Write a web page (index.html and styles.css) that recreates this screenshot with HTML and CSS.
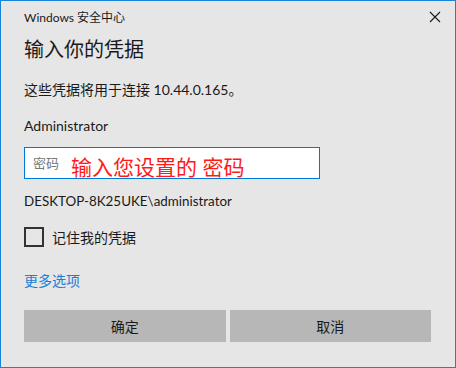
FILE: index.html
```html
<!DOCTYPE html>
<html lang="zh-CN">
<head>
  <meta charset="UTF-8">
  <title>Windows 安全中心</title>
  <link rel="stylesheet" href="styles.css">
</head>
<body>
<div class="window">
  <div class="titlebar">
    <span class="app">Windows 安全中心</span>
    <svg class="close" width="12" height="12" viewBox="0 0 12 12">
      <path d="M1 1 L11 11 M11 1 L1 11" stroke="#1a1a1a" stroke-width="1.1" fill="none"/>
    </svg>
  </div>
  <h1 class="heading">输入你的凭据</h1>
  <p class="line info">这些凭据将用于连接 10.44.0.165。</p>
  <p class="line user">Administrator</p>
  <div class="field">
    <input type="password" class="pwd" placeholder="密码">
    <span class="note">输入您设置的 密码</span>
  </div>
  <p class="line domain">DESKTOP-8K25UKE\administrator</p>
  <label class="remember"><span class="box"></span>记住我的凭据</label>
  <a class="more" href="#">更多选项</a>
  <div class="buttons">
    <button>确定</button>
    <button>取消</button>
  </div>
</div>
</body>
</html>
```
FILE: styles.css
```css
body {
  margin: 0;
  font-family: "Segoe UI", "Lato", "Noto Sans CJK SC", sans-serif;
  color: #1a1a1a;
}
.window {
  width: 456px;
  height: 368px;
  box-sizing: border-box;
  border: 1px solid #1883d7;
  background: #e6e6e6;
  padding: 0 23px;
  display: flex;
  flex-direction: column;
}
.titlebar {
  display: flex;
  justify-content: space-between;
  align-items: center;
  height: 31px;
  margin-right: -19px;
}
.app { font-size: 12px; }
.close { margin-right: 10px; }
.heading {
  margin: 3px 0 0;
  font-size: 20px;
  font-weight: normal;
  line-height: 28px;
}
.line {
  margin: 0;
  font-size: 14px;
  line-height: 20px;
}
.info { margin-top: 17px; }
.user { margin-top: 16px; }
.field {
  position: relative;
  margin-top: 11px;
  width: 296px;
}
.pwd {
  width: 100%;
  height: 32px;
  box-sizing: border-box;
  border: 1px solid #0078d7;
  background: #fff;
  padding: 0 8px;
  font: 13px "Segoe UI", "Lato", "Noto Sans CJK SC", sans-serif;
  outline: none;
}
.pwd::placeholder { color: #777; }
.note {
  position: absolute;
  left: 47px;
  top: 8px;
  color: #ff1a1a;
  font-size: 21px;
  line-height: 24px;
  white-space: nowrap;
}
.domain { margin-top: 12px; font-size: 13.4px; }
.remember {
  display: flex;
  align-items: center;
  gap: 8px;
  margin-top: 16px;
  font-size: 14px;
}
.box {
  width: 20px;
  height: 20px;
  box-sizing: border-box;
  border: 2px solid #333;
}
.more {
  margin-top: 24px;
  font-size: 14px;
  line-height: 20px;
  color: #1a7fd4;
  text-decoration: none;
  align-self: flex-start;
}
.buttons {
  display: flex;
  gap: 4px;
  margin-top: 19px;
  margin-right: 1px;
}
.buttons button {
  flex: 1;
  height: 32px;
  border: none;
  background: #b7b7b7;
  color: #1a1a1a;
  font: 14px "Segoe UI", "Lato", "Noto Sans CJK SC", sans-serif;
}
```
